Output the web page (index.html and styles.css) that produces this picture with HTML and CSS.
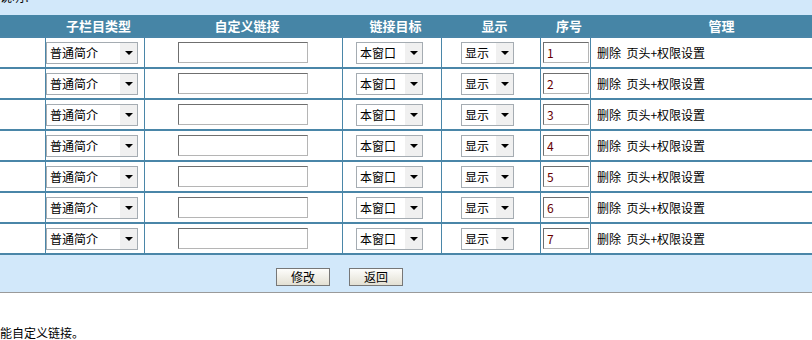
FILE: index.html
```html
<!DOCTYPE html>
<html lang="zh-CN">
<head>
  <meta charset="UTF-8" />
  <title>子栏目设置</title>
  <link rel="stylesheet" href="styles.css">
</head>
<body>

  <div class="tips-top"><p>说明：</p></div>

  <div class="wrap">
    <table class="grid">
      <colgroup>
        <col class="c-id"><col class="c-type"><col class="c-link"><col class="c-target"><col class="c-show"><col class="c-order"><col class="c-manage">
      </colgroup>
      <thead>
        <tr>
          <th></th>
          <th>子栏目类型</th>
          <th>自定义链接</th>
          <th>链接目标</th>
          <th>显示</th>
          <th>序号</th>
          <th>管理</th>
        </tr>
      </thead>
      <tbody id="rows"></tbody>
    </table>
  </div>

  <div class="actions">
    <button type="button" class="btn">修改</button>
    <button type="button" class="btn">返回</button>
  </div>

  <p class="tips-bottom">能自定义链接。</p>

<script>
  const rows = document.getElementById("rows");

  for (let i = 1; i <= 7; i++) {
    const tr = document.createElement("tr");
    tr.innerHTML = `
      <td></td>
      <td class="td-type">
        <span class="pick pick-type"><select><option>普通简介</option><option>外部链接</option></select><i class="arrow"></i></span>
      </td>
      <td class="td-link"><input type="text" class="txt-link" /></td>
      <td class="td-target">
        <span class="pick pick-target"><select><option>本窗口</option><option>新窗口</option></select><i class="arrow"></i></span>
      </td>
      <td class="td-show">
        <span class="pick pick-show"><select><option>显示</option><option>隐藏</option></select><i class="arrow"></i></span>
      </td>
      <td class="td-order"><input type="text" class="txt-order" value="${i}" /></td>
      <td class="td-manage">删除&nbsp; 页头+权限设置</td>`;
    rows.appendChild(tr);
  }
</script>

</body>
</html>
```

FILE: styles.css
```css
* {
  margin: 0;
  padding: 0;
  box-sizing: border-box;
  font-family: 'Noto Sans CJK SC', 'Liberation Sans', sans-serif;
}

body {
  background-color: #fff;
  color: #000;
  font-size: 12px;
  width: 812px;
  overflow: hidden;
}

.tips-top {
  height: 15px;
  overflow: hidden;
  background-color: #d2e8fa;
}

.tips-top p {
  margin-top: -9px;
  line-height: 12px;
  font-size: 12px;
}

.wrap {
  width: 812px;
  overflow: hidden;
}

.grid {
  width: 845px;
  table-layout: fixed;
  border-collapse: separate;
  border-spacing: 0;
}

.c-id { width: 45px; }
.c-type { width: 99px; }
.c-link { width: 198px; }
.c-target { width: 99px; }
.c-show { width: 99px; }
.c-order { width: 50px; }
.c-manage { width: 255px; }

th {
  height: 21px;
  background-color: #4685a6;
  color: #fff;
  font-size: 13px;
  font-weight: bold;
  line-height: 21px;
  padding-left: 8px;
  text-align: center;
}

td {
  height: 31px;
  border-top: 2px solid #4a86a8;
  border-left: 1px solid #4a86a8;
  vertical-align: middle;
  text-align: left;
}

td:first-child {
  border-left: none;
}

tbody tr:last-child td {
  height: 33px;
  border-bottom: 2px solid #4a86a8;
}

.td-type { padding-left: 0; }
.td-link { padding-left: 33px; }
.td-target { padding-left: 13px; }
.td-show { padding-left: 19px; }
.td-order { padding-left: 2px; }
.td-manage { padding-left: 6px; }

.pick {
  display: inline-flex;
  height: 22px;
  border: 1px solid #a5acb2;
  background-color: #fff;
  vertical-align: middle;
}

.pick select {
  appearance: none;
  -webkit-appearance: none;
  border: none;
  background: transparent;
  font-size: 12px;
  color: #000;
  padding-left: 3px;
  flex: 1;
  min-width: 0;
  outline: none;
}

.pick .arrow {
  width: 17px;
  background-color: #f0f0f0;
  display: flex;
  align-items: center;
  justify-content: center;
}

.pick .arrow::after {
  content: "";
  border-left: 4px solid transparent;
  border-right: 4px solid transparent;
  border-top: 4px solid #000;
}

.pick-type { width: 92px; }
.pick-target { width: 67px; }
.pick-show { width: 53px; }

.txt-link,
.txt-order {
  height: 21px;
  border: 1px solid #6f6f6f;
  border-right-color: #b5b5b5;
  border-bottom-color: #b5b5b5;
  font-size: 12px;
  padding-left: 3px;
  vertical-align: middle;
  color: #600;
}

.txt-link { width: 130px; }
.txt-order { width: 46px; }

.actions {
  background-color: #d2e8fa;
  height: 38px;
  border-bottom: 1px solid #9a9a9a;
  padding: 13px 0 0 276px;
  display: flex;
  gap: 19px;
  align-items: flex-start;
}

.btn {
  width: 54px;
  height: 18px;
  border: 1px solid #777;
  background: linear-gradient(#fdfdfb, #e3e0d3);
  font-size: 12px;
  line-height: 16px;
  color: #000;
  cursor: pointer;
}

.tips-bottom {
  margin-top: 33px;
  line-height: 14px;
  font-size: 12px;
}
```
